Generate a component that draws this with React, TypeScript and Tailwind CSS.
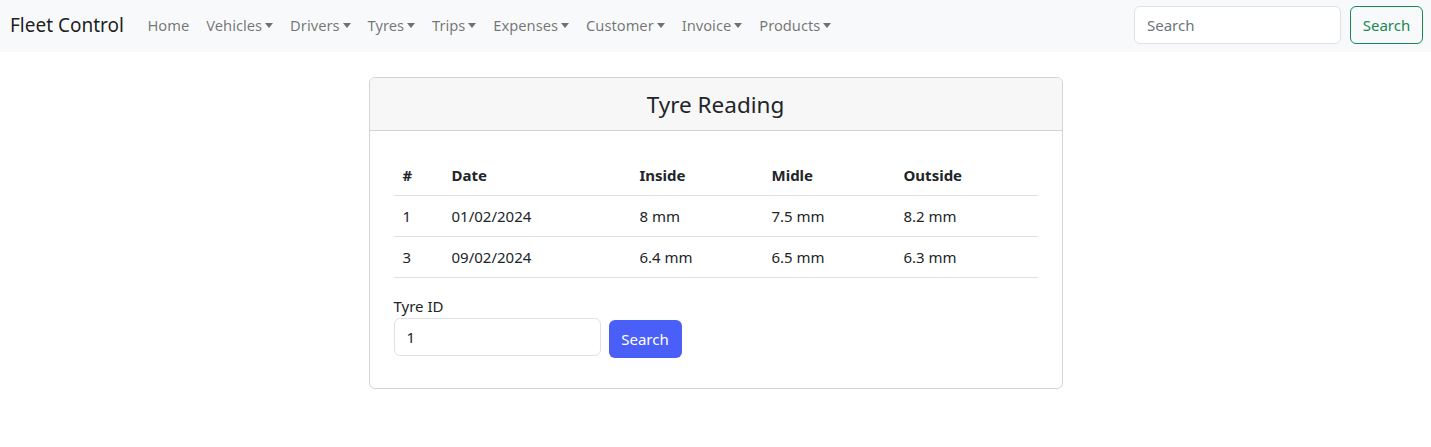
import React from "react";

const font = { fontFamily: '"Segoe UI", "Noto Sans", "Liberation Sans", sans-serif' };

function Caret() {
  return (
    <span className="ml-[3px] inline-block border-t-[5px] border-x-[4.5px] border-x-transparent border-t-current w-0 h-0" />
  );
}

const links: [string, boolean][] = [
  ["Home", false],
  ["Vehicles", true],
  ["Drivers", true],
  ["Tyres", true],
  ["Trips", true],
  ["Expenses", true],
  ["Customer", true],
  ["Invoice", true],
  ["Products", true],
];

const rows = [
  ["1", "01/02/2024", "8 mm", "7.5 mm", "8.2 mm"],
  ["3", "09/02/2024", "6.4 mm", "6.5 mm", "6.3 mm"],
];

export default function App() {
  return (
    <div className="min-h-[447px] bg-white text-[#212529] text-[16px] leading-[24px]" style={font}>
      <nav className="bg-[#f8f9fa] h-[52px] flex items-center pl-[10px] pr-[8px] pb-[2px]">
        <span className="text-[19px] leading-[30px] text-[rgba(0,0,0,0.9)] mr-[15px]">Fleet Control</span>
        <div className="flex items-center">
          {links.map(([l, c]) => (
            <span key={l} className="px-[8.5px] py-[8px] text-[14.7px] text-[rgba(0,0,0,0.55)] whitespace-nowrap flex items-center">
              {l}
              {c && <Caret />}
            </span>
          ))}
        </div>
        <div className="ml-auto flex items-center gap-[9px]">
          <div className="w-[207px] h-[38px] bg-white border border-[#dee2e6] rounded-[6px] px-[12px] flex items-center text-[15px] text-[#6c757d]">
            Search
          </div>
          <div className="h-[38px] w-[73px] justify-center border border-[#198754] rounded-[6px] text-[15px] text-[#198754] flex items-center">
            Search
          </div>
        </div>
      </nav>
      <div className="flex justify-center pt-[25px]">
        <div className="w-[694px] border border-[#d3d3d3] rounded-[6px] overflow-hidden">
          <div className="bg-[#f7f7f7] border-b border-[#d3d3d3] h-[53px] flex items-center justify-center">
            <h4 className="text-[22.5px] leading-[29px] font-normal">Tyre Reading</h4>
          </div>
          <div className="px-[24px] pt-[24px] pb-[30px]">
            <table className="w-full border-collapse">
              <thead>
                <tr className="border-b border-[#dee2e6]">
                  <th className="w-[50px] text-left font-bold p-[8px] pl-[9px] text-[15px]">#</th>
                  <th className="w-[188px] text-left font-bold p-[8px] text-[15px]">Date</th>
                  <th className="w-[132px] text-left font-bold p-[8px] text-[15px]">Inside</th>
                  <th className="w-[132px] text-left font-bold p-[8px] text-[15px]">Midle</th>
                  <th className="text-left font-bold p-[8px] text-[15px]">Outside</th>
                </tr>
              </thead>
              <tbody>
                {rows.map((r) => (
                  <tr key={r[0]} className="border-b border-[#dee2e6]">
                    {r.map((c, i) => (
                      <td key={i} className={i === 0 ? "p-[8px] pl-[9px] text-[15px]" : "p-[8px] text-[15px]"}>{c}</td>
                    ))}
                  </tr>
                ))}
              </tbody>
            </table>
            <div className="mt-[16px] text-[15px]">Tyre ID</div>
            <div className="flex items-start gap-[8px]">
              <div className="w-[207px] h-[38px] border border-[#dee2e6] rounded-[6px] px-[12px] flex items-center text-[15px]">1</div>
              <div className="mt-[2px] h-[38px] w-[73px] justify-center rounded-[6px] bg-[#4a5ff7] text-white flex items-center text-[15px]">Search</div>
            </div>
          </div>
        </div>
      </div>
    </div>
  );
}
